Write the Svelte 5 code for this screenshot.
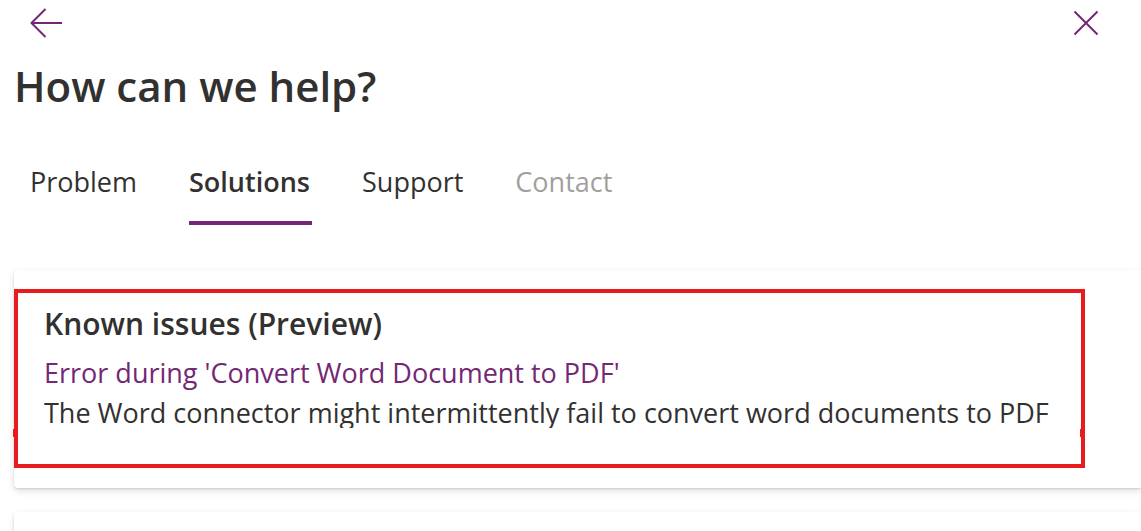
<script>
  const tabs = [
    { id: 'problem', label: 'Problem' },
    { id: 'solutions', label: 'Solutions' },
    { id: 'support', label: 'Support' },
    { id: 'contact', label: 'Contact', disabled: true }
  ];
  let active = $state('solutions');
</script>

<main class="panel">
  <header class="bar">
    <button class="icon" aria-label="Back">
      <svg width="32" height="30" viewBox="0 0 32 30" aria-hidden="true">
        <path d="M15.5 1 1.5 15 15.5 29M1.5 15H32" />
      </svg>
    </button>
    <button class="icon" aria-label="Close">
      <svg width="26" height="26" viewBox="0 0 26 26" aria-hidden="true">
        <path d="M1.5 1.5 24.5 24.5M24.5 1.5 1.5 24.5" />
      </svg>
    </button>
  </header>

  <h1>How can we help?</h1>

  <div class="tabs" role="tablist">
    {#each tabs as tab (tab.id)}
      <button
        class="tab"
        class:active={active === tab.id}
        role="tab"
        aria-selected={active === tab.id}
        disabled={tab.disabled}
        onclick={() => (active = tab.id)}>{tab.label}</button>
    {/each}
  </div>

  <section class="card">
    <div class="highlight">
      <h2>Known issues (Preview)</h2>
      <a href="#issue">Error during 'Convert Word Document to PDF'</a>
      <p>The Word connector might intermittently fail to convert word documents to PDF</p>
    </div>
  </section>
  <section class="card next"></section>
</main>

<style>
  :global(body) {
    background: #fff;
    overflow: hidden;
  }
  .panel {
    font-family: 'Segoe UI', 'Open Sans', sans-serif;
    font-size: 27px;
    line-height: 40px;
    color: #323130;
    padding-left: 14px;
  }
  button {
    font: inherit;
    color: inherit;
    background: none;
    border: 0;
    padding: 0;
    cursor: pointer;
  }
  .bar {
    display: flex;
    justify-content: space-between;
    align-items: center;
    height: 46px;
    padding: 0 42px 0 16px;
  }
  .icon {
    display: flex;
  }
  .icon svg {
    fill: none;
    stroke: #742774;
    stroke-width: 2;
  }
  h1 {
    margin: 10px 0 0;
    font-size: 42px;
    line-height: 60px;
    font-weight: 600;
  }
  .tabs {
    display: flex;
    gap: 50px;
    padding: 46px 16px 0;
  }
  .tab {
    height: 63px;
    padding: 0 2px 22px 0;
    border-bottom: 4px solid transparent;
  }
  .tab.active {
    font-weight: 600;
    border-bottom-color: #742774;
  }
  .tab:disabled {
    color: #a19f9d;
    cursor: default;
  }
  .card {
    margin-top: 45px;
    padding: 19px 56px 20px 0;
    border-radius: 4px 0 0 4px;
    box-shadow: 0 3px 7px rgba(0, 0, 0, 0.13), 0 1px 2px rgba(0, 0, 0, 0.11);
  }
  .card.next {
    margin-top: 24px;
    padding: 9px 0 10px;
    border-radius: 4px 0 0 0;
  }
  .highlight {
    position: relative;
    border: 4px solid #e81c1c;
    padding: 11px 26px 36px;
  }
  .highlight::before,
  .highlight::after {
    content: '';
    position: absolute;
    bottom: 27px;
    width: 4px;
    height: 8px;
    background: #e81c1c;
  }
  .highlight::before {
    left: -5px;
  }
  .highlight::after {
    right: -3px;
  }
  h2 {
    margin: 0 0 9px;
    font-size: 30px;
    line-height: 40px;
    font-weight: 600;
  }
  a {
    display: block;
    color: #742774;
    text-decoration: none;
  }
  p {
    margin: 0;
    height: 35px;
    overflow: hidden;
  }
</style>
